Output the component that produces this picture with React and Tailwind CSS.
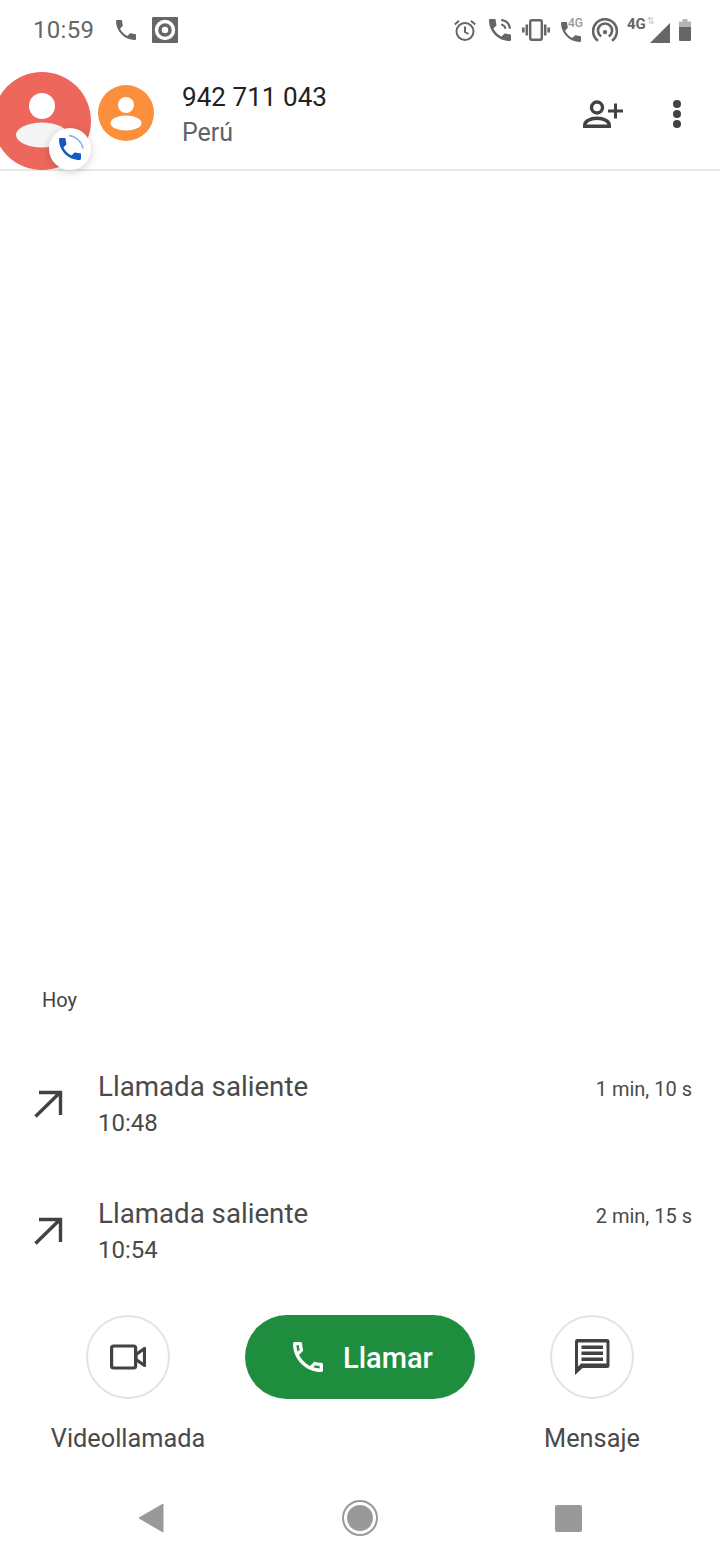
const PHONE = "M6.62 10.79c1.44 2.83 3.76 5.14 6.59 6.59l2.2-2.2c.27-.27.67-.36 1.02-.24 1.12.37 2.33.57 3.57.57.55 0 1 .45 1 1V20c0 .55-.45 1-1 1C10.61 21 3 13.39 3 4c0-.55.45-1 1-1h3.5c.55 0 1 .45 1 1 0 1.25.2 2.45.57 3.57.11.35.03.74-.25 1.02l-2.2 2.2z";
const PHONE_OUT = "M6.54 5c.06.89.21 1.76.45 2.59l-1.2 1.2c-.41-1.2-.67-2.47-.76-3.79h1.51m9.86 12.02c.85.24 1.72.39 2.6.45v1.49c-1.32-.09-2.59-.35-3.8-.75l1.2-1.19M7.5 3H4c-.55 0-1 .45-1 1 0 9.39 7.61 17 17 17 .55 0 1-.45 1-1v-3.49c0-.55-.45-1-1-1-1.24 0-2.45-.2-3.57-.57-.1-.04-.21-.05-.31-.05-.26 0-.51.1-.71.29l-2.2 2.2c-2.83-1.45-5.15-3.76-6.59-6.59l2.2-2.2c.28-.28.36-.67.25-1.02C8.7 6.45 8.5 5.25 8.5 4c0-.55-.45-1-1-1z";

function StatusBar() {
  return (
    <div className="h-[60px] flex items-center pl-[33px] pr-[29px] text-[#666666]">
      <span className="text-[24px] leading-none tracking-[0.3px]">10:59</span>
      <svg viewBox="3 3 18 18" className="w-[20px] h-[20px] ml-[22px]" fill="currentColor">
        <path d={PHONE} />
      </svg>
      <svg viewBox="0 0 26 26" className="w-[26px] h-[26px] ml-[16px]">
        <rect width="26" height="26" rx="1" fill="#666666" />
        <circle cx="13" cy="13" r="8.5" fill="none" stroke="#fff" strokeWidth="3.4" />
        <circle cx="13" cy="13" r="3.2" fill="#fff" />
      </svg>
      <div className="ml-auto flex items-center">
        <svg viewBox="0 0 24 24" className="w-[24px] h-[24px]" fill="none" stroke="currentColor" strokeWidth="2">
          <circle cx="12" cy="13.5" r="8.5" />
          <path d="M12 8.500v5.500l3.500 2M1.800 6.500 6 2.800M22.200 6.500 18 2.800" />
        </svg>
        <svg viewBox="3 3 18 18" className="w-[22px] h-[22px] ml-[12px]" fill="currentColor">
          <path d={PHONE} />
          <path d="M13 3v1.800c3.400 0 6.200 2.800 6.200 6.200H21c0-4.400-3.600-8-8-8zm0 3.800v1.800c1.300 0 2.400 1.100 2.400 2.400h1.800c0-2.300-1.900-4.200-4.200-4.200z" />
        </svg>
        <svg viewBox="0 0 28 22" className="w-[28px] h-[22px] ml-[11px]" fill="none" stroke="currentColor">
          <rect x="8.200" y="1.200" width="11.600" height="19.600" rx="1.500" strokeWidth="2.400" />
          <path d="M4.800 5.500v11M1.300 8.500v5M23.200 5.500v11M26.700 8.500v5" strokeWidth="2.600" />
        </svg>
        <div className="relative w-[24px] h-[24px] ml-[9px]">
          <svg viewBox="3 3 18 18" className="absolute left-[1px] bottom-0 w-[22px] h-[20px]" fill="currentColor">
            <path d={PHONE} />
          </svg>
          <span className="absolute left-[9px] -top-[2px] text-[12px] leading-[14px] font-medium text-[#999999]">4G</span>
        </div>
        <svg viewBox="0 0 24 24" className="w-[26px] h-[26px] ml-[9px] mt-[2px]" fill="none" stroke="currentColor" strokeWidth="2.400">
          <path d="M5.600 21a11 11 0 1 1 12.800 0M8.500 17a6.500 6.500 0 1 1 7 0" />
          <circle cx="12" cy="13" r="2" fill="currentColor" stroke="none" />
        </svg>
        <div className="relative w-[44px] h-[24px] ml-[9px]">
          <span className="absolute left-0 -top-[3px] text-[15px] leading-[18px] font-bold text-[#666666]">4G</span>
          <span className="absolute left-[20px] -top-[2px] text-[9px] leading-[10px] text-[#c4c4c4]">⇅</span>
          <svg viewBox="0 0 20 20" className="absolute right-[1px] bottom-[-1px] w-[20px] h-[20px]" fill="currentColor">
            <path d="M20 0v20H0z" />
          </svg>
        </div>
        <svg viewBox="0 0 12 22" className="w-[12px] h-[22px] ml-[8px]" fill="currentColor">
          <path d="M3.500 0h5v2.500h2.500a1 1 0 0 1 1 1V8H0V3.500a1 1 0 0 1 1-1h2.500z" fill="#b5b5b5" />
          <path d="M0 8h12v13a1 1 0 0 1-1 1H1a1 1 0 0 1-1-1z" />
        </svg>
      </div>
    </div>
  );
}

function Header() {
  return (
    <div className="h-[111px] flex items-start bg-white border-b-2 border-[#e8e8e8] pl-[98px] pr-[39px]">
      <div className="w-[56px] h-[56px] mt-[25px] rounded-full bg-[#fb8f3c] flex items-center justify-center shrink-0">
        <svg viewBox="0 0 56 56" className="w-[56px] h-[56px]" fill="#fff">
          <circle cx="28" cy="20" r="8" />
          <ellipse cx="28" cy="38" rx="15.500" ry="7.500" />
        </svg>
      </div>
      <div className="ml-[28px] mt-[19px] flex flex-col">
        <span className="text-[26px] leading-[36px] text-[#212121] tracking-[0.05px]">942 711 043</span>
        <span className="text-[25px] leading-[34px] text-[#5f6368] mt-[1px]">Perú</span>
      </div>
      <svg viewBox="0 0 40 28" className="w-[40px] h-[28px] ml-auto mt-[40px]" fill="none" stroke="#424242" strokeWidth="3.400">
        <circle cx="14" cy="7.500" r="5.500" />
        <path d="M1.700 26.300v-1c0-4 5.500-7 12.300-7s12.300 3 12.300 7v1z" />
        <path d="M25 11h15M32.500 3.500v15" strokeWidth="3" />
      </svg>
      <div className="ml-[50px] mt-[40px] w-[8px] flex flex-col gap-[2px]">
        <span className="w-[8px] h-[8px] rounded-full bg-[#424242]" />
        <span className="w-[8px] h-[8px] rounded-full bg-[#424242]" />
        <span className="w-[8px] h-[8px] rounded-full bg-[#424242]" />
      </div>
    </div>
  );
}

function Bubble() {
  return (
    <div className="absolute left-[-7px] top-[72px] w-[98px] h-[98px]">
      <div className="w-[98px] h-[98px] rounded-full bg-[#ee675c] overflow-hidden">
        <svg viewBox="0 0 98 98" className="w-[98px] h-[98px]">
          <circle cx="49" cy="34" r="13" fill="#fff" />
          <ellipse cx="49" cy="63" rx="26" ry="12.500" fill="#f5f5f5" />
        </svg>
      </div>
      <div className="absolute left-[56px] top-[56px] w-[42px] h-[42px] rounded-full bg-white shadow-[0_2px_10px_rgba(0,0,0,0.18)] flex items-center justify-center">
        <svg viewBox="0 0 42 42" className="w-[42px] h-[42px]">
          <path d={PHONE} transform="translate(6.330 6.330) scale(1.222)" fill="#1558c4" />
          <path d="M20 7.500c6.500.5 12.500 6 14 13" fill="none" stroke="#8ab0e6" strokeWidth="1.500" />
        </svg>
      </div>
    </div>
  );
}

function CallRow({ time, dur }) {
  return (
    <div className="h-[127px] flex items-start pl-[33px] pr-[28px] pt-[13px]">
      <svg viewBox="0 0 30 30" className="w-[30px] h-[30px] mt-[20px] shrink-0" fill="none" stroke="#424242" strokeWidth="3.400">
        <path d="M2.500 27.500 27 3.500M6 3.500h21.500V26" />
      </svg>
      <div className="ml-[35px] flex flex-col">
        <span className="text-[27.700px] leading-[36px] text-[#4a4a4a]">Llamada saliente</span>
        <span className="text-[24px] leading-[34px] text-[#4a4a4a] mt-[1px]">{time}</span>
      </div>
      <span className="ml-auto text-[20px] leading-[28px] mt-[6px] text-[#4a4a4a]">{dur}</span>
    </div>
  );
}

function SideAction({ label, children }) {
  return (
    <div className="w-[160px] flex flex-col items-center">
      <div className="w-[84px] h-[84px] rounded-full border-2 border-[#e4e4e4] flex items-center justify-center">
        {children}
      </div>
      <span className="mt-[22px] text-[25.300px] leading-[36px] text-[#4a4a4a] whitespace-nowrap">{label}</span>
    </div>
  );
}

export default function App() {
  return (
    <div className="relative w-[720px] h-[1560px] bg-white overflow-hidden flex flex-col font-['Roboto',sans-serif]">
      <StatusBar />
      <Header />
      <Bubble />
      <div className="flex-1" />
      <div className="pl-[42px] text-[20px] leading-[24px] text-[#424242] mb-[44px]">Hoy</div>
      <div className="flex flex-col">
        <CallRow time="10:48" dur="1 min, 10 s" />
        <CallRow time="10:54" dur="2 min, 15 s" />
      </div>
      <div className="mt-[5px] pl-[48px] pr-[48px] flex items-start justify-between">
        <SideAction label="Videollamada">
          <svg viewBox="0 0 36 26" className="w-[36px] h-[26px]" fill="none" stroke="#424242" strokeWidth="3.200" strokeLinejoin="round">
            <rect x="1.600" y="2" width="24" height="22" rx="2" />
            <path d="M26 10.500 34.500 4.500v17L26 15.500z" />
          </svg>
        </SideAction>
        <div className="w-[230px] h-[84px] rounded-full bg-[#1e8e3e] flex items-center pl-[45px]">
          <svg viewBox="0 0 24 24" className="w-[40px] h-[40px] -ml-[2px]" fill="#fff">
            <path d={PHONE_OUT} />
          </svg>
          <span className="ml-[15px] mt-[3px] text-[29px] leading-none font-medium text-white">Llamar</span>
        </div>
        <SideAction label="Mensaje">
          <svg viewBox="0 0 36 36" className="w-[36px] h-[36px]" fill="#424242">
            <path fillRule="evenodd" d="M3 0h30a2.500 2.500 0 0 1 2.500 2.500v24A2.500 2.500 0 0 1 33 29H8.500L1 36V2.500A2.500 2.500 0 0 1 3 0zm1 3.500v24l3-3h25.500v-21z" />
            <path d="M7.500 6.500h21.500v3.500H7.500zM7.500 12.500h21.500v3.500H7.500zM7.500 18.500h21.500v3.500H7.500z" />
          </svg>
        </SideAction>
      </div>
      <div className="h-[84px] mt-[19px] flex items-center">
        <div className="flex w-full items-center justify-between pl-[138px] pr-[138px]">
          <svg viewBox="0 0 26 30" className="w-[26px] h-[30px]" fill="#999999">
            <path d="M25 1v28L1 15z" stroke="#999999" strokeWidth="1" strokeLinejoin="round" />
          </svg>
          <div className="w-[36px] h-[36px] rounded-full border-2 border-[#999999] flex items-center justify-center">
            <div className="w-[26px] h-[26px] rounded-full bg-[#999999]" />
          </div>
          <div className="w-[27px] h-[27px] rounded-[2px] bg-[#999999]" />
        </div>
      </div>
    </div>
  );
}
